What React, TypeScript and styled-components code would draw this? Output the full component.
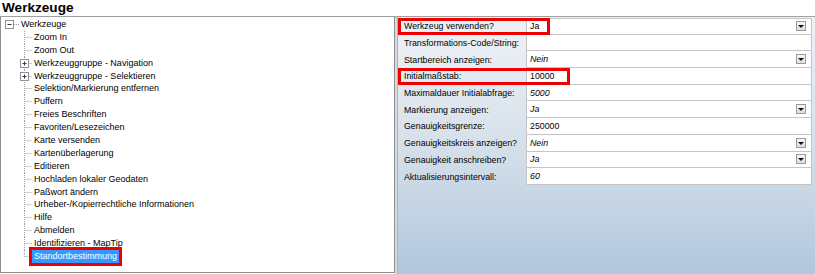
import React from 'react';
import styled, { createGlobalStyle } from 'styled-components';

// --- Data ---
type TreeNode = { label: string; expandable?: boolean; selected?: boolean };

const toolNodes: TreeNode[] = [
  { label: 'Zoom In' },
  { label: 'Zoom Out' },
  { label: 'Werkzeuggruppe - Navigation', expandable: true },
  { label: 'Werkzeuggruppe - Selektieren', expandable: true },
  { label: 'Selektion/Markierung entfernen' },
  { label: 'Puffern' },
  { label: 'Freies Beschriften' },
  { label: 'Favoriten/Lesezeichen' },
  { label: 'Karte versenden' },
  { label: 'Kartenüberlagerung' },
  { label: 'Editieren' },
  { label: 'Hochladen lokaler Geodaten' },
  { label: 'Paßwort ändern' },
  { label: 'Urheber-/Kopierrechtliche Informationen' },
  { label: 'Hilfe' },
  { label: 'Abmelden' },
  { label: 'Identifizieren - MapTip' },
  { label: 'Standortbestimmung', selected: true },
];

type Property = {
  label: string;
  value: string;
  italic?: boolean;
  dropdown?: boolean;
  highlightWidth?: number; // red annotation box, measured from the label start
};

const properties: Property[] = [
  { label: 'Werkzeug verwenden?', value: 'Ja', dropdown: true, highlightWidth: 152 },
  { label: 'Transformations-Code/String:', value: '' },
  { label: 'Startbereich anzeigen:', value: 'Nein', italic: true, dropdown: true },
  { label: 'Initialmaßstab:', value: '10000', highlightWidth: 172 },
  { label: 'Maximaldauer Initialabfrage:', value: '5000', italic: true },
  { label: 'Markierung anzeigen:', value: 'Ja', italic: true, dropdown: true },
  { label: 'Genauigkeitsgrenze:', value: '250000' },
  { label: 'Genauigkeitskreis anzeigen?', value: 'Nein', italic: true, dropdown: true },
  { label: 'Genauigkeit anschreiben?', value: 'Ja', italic: true, dropdown: true },
  { label: 'Aktualisierungsintervall:', value: '60', italic: true },
];

// --- Styles ---
const GlobalStyle = createGlobalStyle`
  html, body {
    margin: 0;
    padding: 0;
    background: #ffffff;
  }
  body {
    font-family: "Liberation Sans", Arial, sans-serif;
    color: #000;
  }
`;

const Page = styled.div`
  width: 815px;
  height: 274px;
  overflow: hidden;
  background: #ffffff;
  display: flex;
  flex-direction: column;
`;

const TitleBar = styled.div`
  height: 16px;
  line-height: 16px;
  padding-left: 2px;
  font-size: 13.6px;
  font-weight: 700;
  border-bottom: 1px solid #a0a0a0;
`;

const Body = styled.div`
  flex: 1;
  display: flex;
  min-height: 0;
`;

const TreePanel = styled.div`
  width: 393px;
  height: 254px;
  border-left: 1px solid #8f8f8f;
  border-right: 1px solid #8f8f8f;
  border-bottom: 1px solid #8f8f8f;
  background: #ffffff;
  padding-top: 1px;
  font-size: 9px;
`;

const Splitter = styled.div`
  width: 2px;
  background: #d6d9de;
`;

const PropertyPanel = styled.div`
  flex: 1;
  padding: 1px 3px 0 0;
  border-left: 1px solid #aab4c0;
  background: linear-gradient(to bottom, #eef2f7 0%, #d9e2eb 45%, #b1c7dd 100%);
  font-size: 8.8px;
`;

const TreeRow = styled.div`
  height: 12.9px;
  display: flex;
  align-items: center;
  white-space: nowrap;
`;

const Indent = styled.div<{ $width: number }>`
  width: ${p => p.$width}px;
  height: 100%;
  flex-shrink: 0;
`;

const NodeLabel = styled.span<{ $selected?: boolean }>`
  line-height: 12.9px;
  padding: 0 2px;
  background: ${p => (p.$selected ? '#3399ff' : 'transparent')};
  color: ${p => (p.$selected ? '#ffffff' : '#000000')};
  outline: ${p => (p.$selected ? '3px solid #ee0000' : 'none')};
  outline-offset: 0;
`;

const Grid = styled.div`
  display: grid;
  grid-template-columns: 128px 1fr;
  grid-auto-rows: 16.7px;
`;

const PropRow = styled.div`
  display: contents;
`;

const LabelCell = styled.div`
  position: relative;
  padding-left: 6px;
  display: flex;
  align-items: center;
  white-space: nowrap;
`;

const ValueCell = styled.div<{ $first?: boolean; $italic?: boolean }>`
  background: #ffffff;
  border-left: 1px solid #c5c5c5;
  border-right: 1px solid #c5c5c5;
  border-bottom: 1px solid #c5c5c5;
  border-top: ${p => (p.$first ? '1px solid #c5c5c5' : 'none')};
  display: flex;
  align-items: center;
  justify-content: space-between;
  padding: 0 5px 0 3px;
  font-style: ${p => (p.$italic ? 'italic' : 'normal')};
`;

const Highlight = styled.div<{ $width: number }>`
  position: absolute;
  left: 0;
  top: 0;
  width: ${p => p.$width}px;
  height: 100%;
  box-sizing: border-box;
  border: 3px solid #ee0000;
  pointer-events: none;
  z-index: 2;
`;

const DropButton = styled.div`
  width: 10px;
  height: 10px;
  box-sizing: border-box;
  border: 1px solid #9a9a9a;
  background: linear-gradient(to bottom, #f6f6f6, #dedede);
  display: flex;
  align-items: center;
  justify-content: center;

  &::after {
    content: '';
    border-left: 3px solid transparent;
    border-right: 3px solid transparent;
    border-top: 3px solid #111;
    margin-top: 1px;
  }
`;

// --- Tree drawings ---
const ExpanderBox: React.FC<{ open: boolean; cx: number }> = ({ open, cx }) => (
  <>
    <rect x={cx - 4} y={2.5} width={8} height={8} fill="#ffffff" stroke="#919191" />
    <line x1={cx - 2} y1={6.5} x2={cx + 2} y2={6.5} stroke="#2b3a55" />
    {!open && <line x1={cx} y1={4.5} x2={cx} y2={8.5} stroke="#2b3a55" />}
  </>
);

const RootConnector: React.FC = () => (
  <svg width={18} height={13} style={{ flexShrink: 0, display: 'block' }}>
    <line x1={13} y1={6.5} x2={18} y2={6.5} stroke="#a0a0a0" strokeDasharray="1 1" />
    <ExpanderBox open cx={8.5} />
  </svg>
);

const ChildConnector: React.FC<{ last: boolean; expandable?: boolean }> = ({ last, expandable }) => (
  <svg width={14} height={13} style={{ flexShrink: 0, display: 'block' }}>
    <line x1={6.5} y1={0} x2={6.5} y2={last ? 6.5 : 13} stroke="#a0a0a0" strokeDasharray="1 1" />
    <line x1={6.5} y1={6.5} x2={14} y2={6.5} stroke="#a0a0a0" strokeDasharray="1 1" />
    {expandable && <ExpanderBox open={false} cx={6.5} />}
  </svg>
);

export default function App() {
  return (
    <>
      <GlobalStyle />
      <Page>
        <TitleBar>Werkzeuge</TitleBar>
        <Body>
          <TreePanel>
            <TreeRow>
              <RootConnector />
              <NodeLabel>Werkzeuge</NodeLabel>
            </TreeRow>
            {toolNodes.map((node, i) => (
              <TreeRow key={node.label}>
                <Indent $width={17} />
                <ChildConnector last={i === toolNodes.length - 1} expandable={node.expandable} />
                <NodeLabel $selected={node.selected}>{node.label}</NodeLabel>
              </TreeRow>
            ))}
          </TreePanel>
          <Splitter />
          <PropertyPanel>
            <Grid>
              {properties.map((prop, i) => (
                <PropRow key={prop.label}>
                  <LabelCell>
                    {prop.label}
                    {prop.highlightWidth && <Highlight $width={prop.highlightWidth} />}
                  </LabelCell>
                  <ValueCell $first={i === 0} $italic={prop.italic}>
                    <span>{prop.value}</span>
                    {prop.dropdown && <DropButton />}
                  </ValueCell>
                </PropRow>
              ))}
            </Grid>
          </PropertyPanel>
        </Body>
      </Page>
    </>
  );
}
